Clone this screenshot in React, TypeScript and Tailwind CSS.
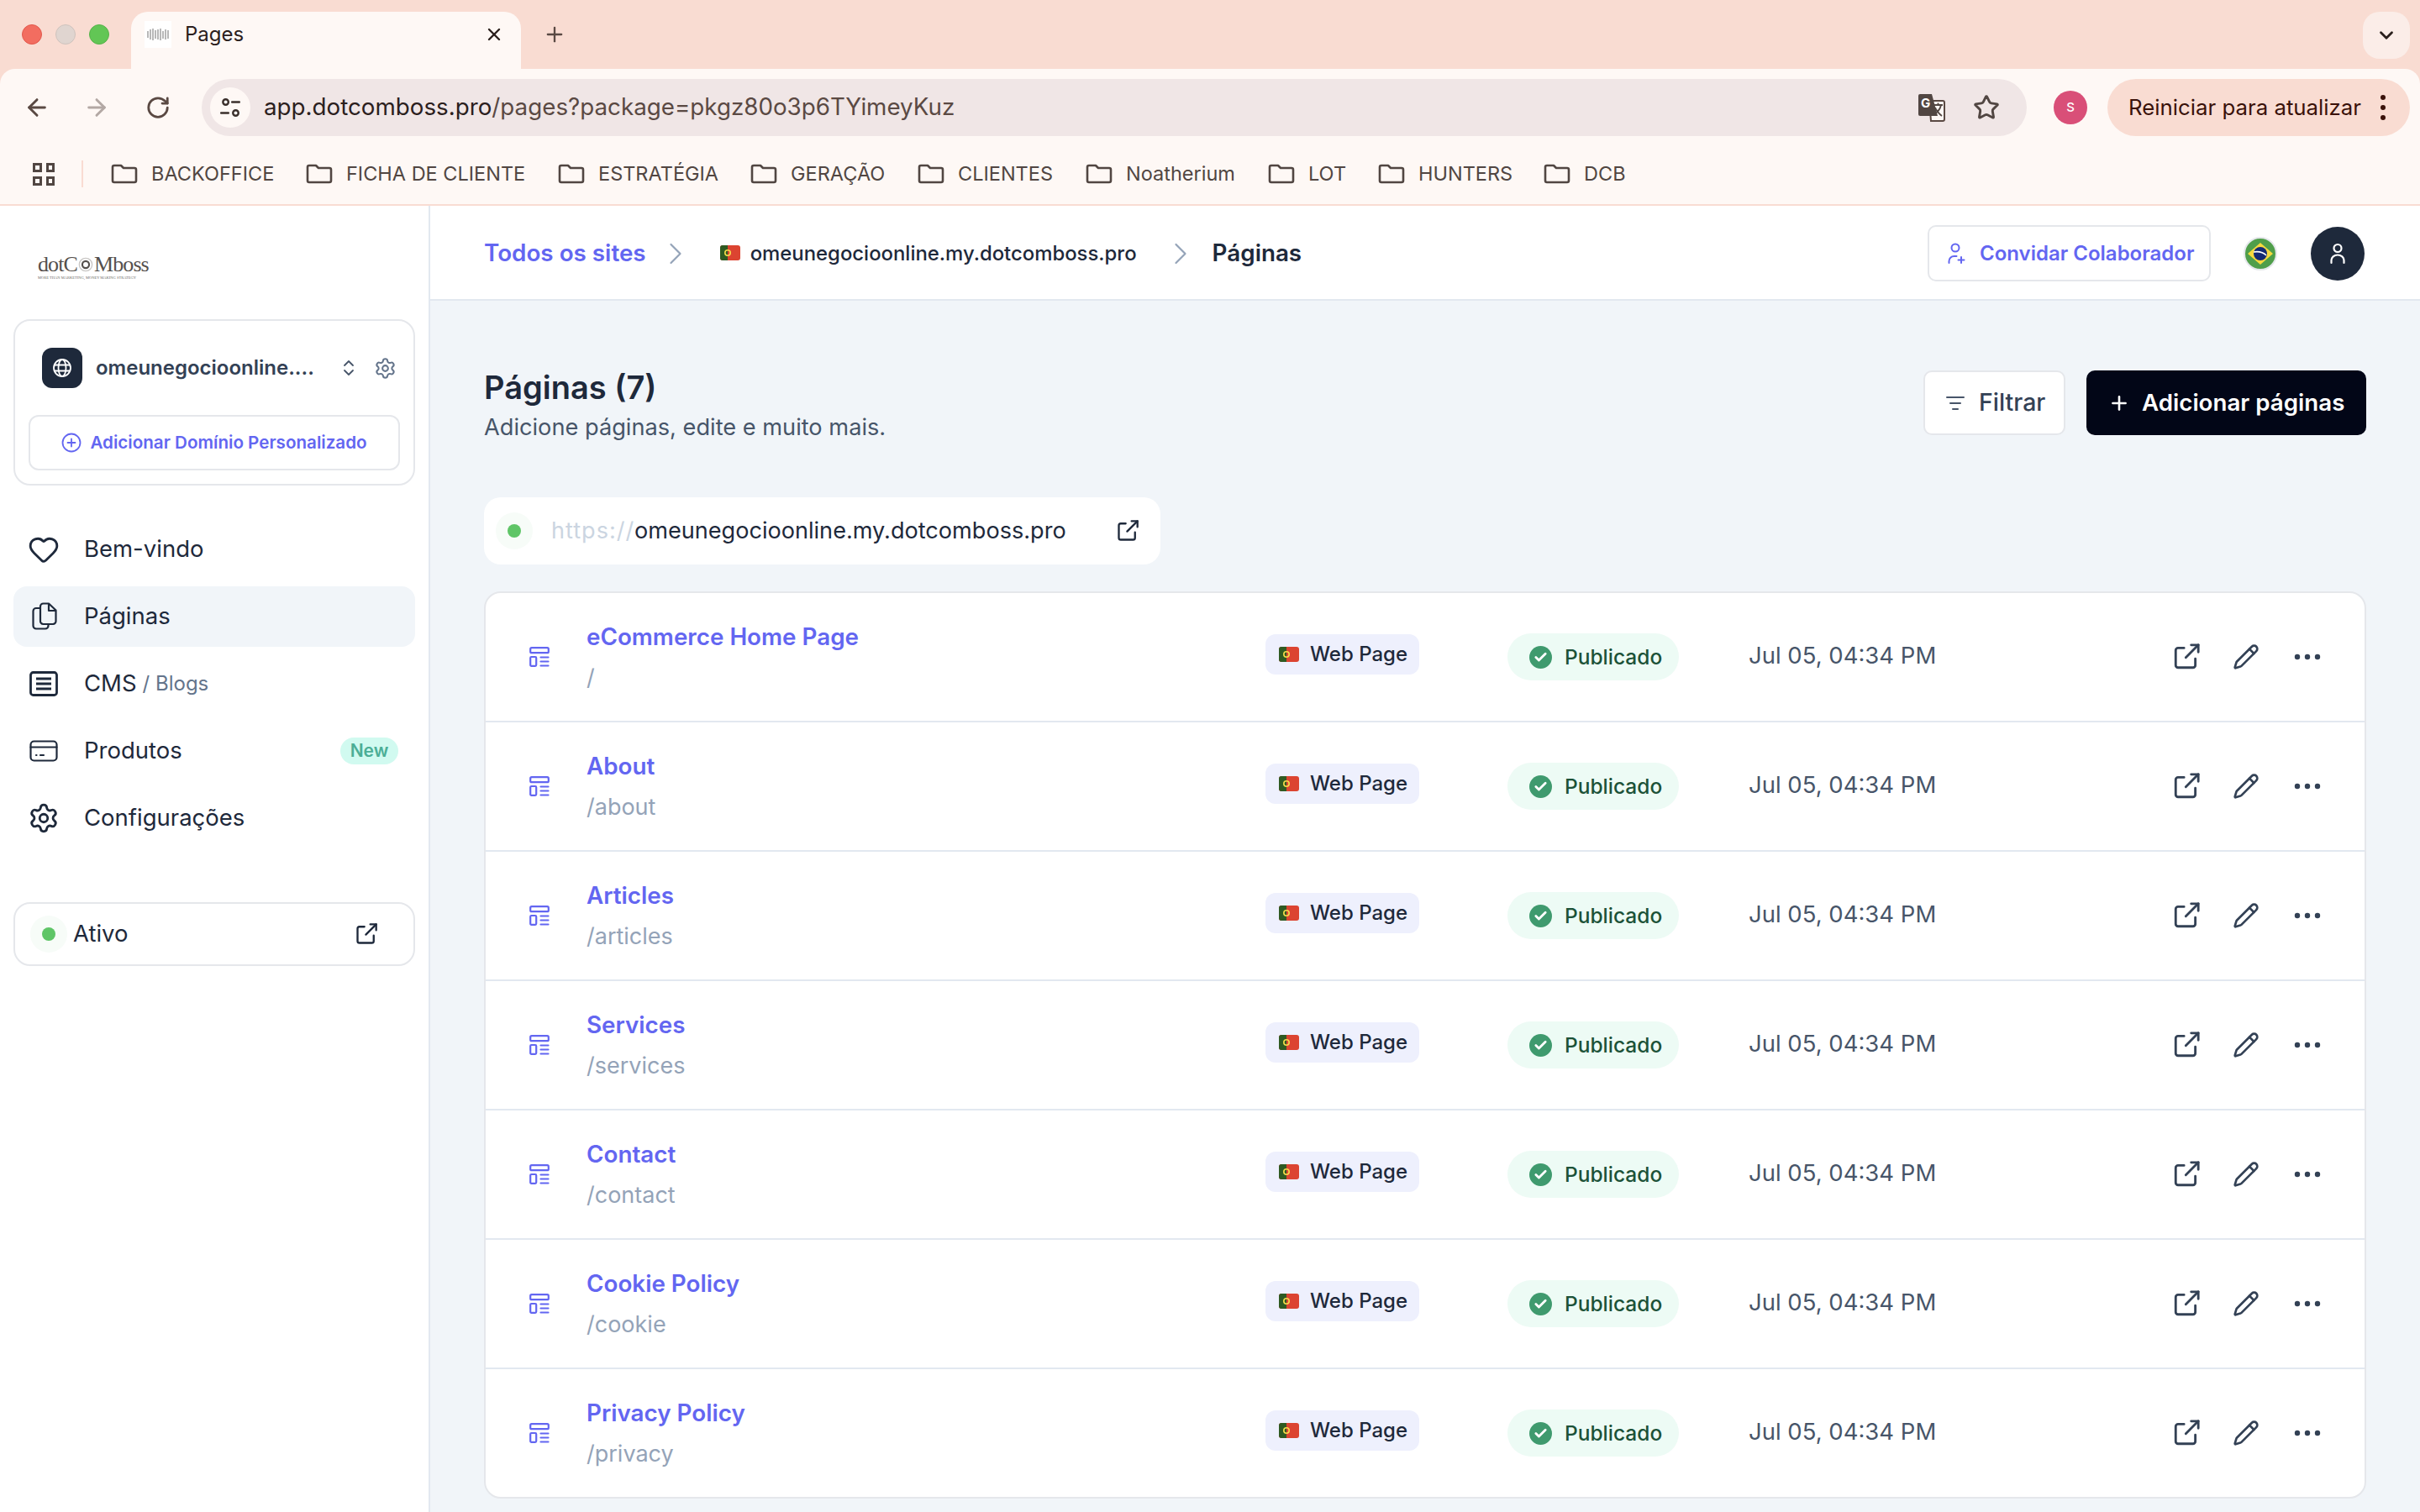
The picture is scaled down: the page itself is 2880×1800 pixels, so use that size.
import {
  ArrowLeft,
  ArrowRight,
  Check,
  ChevronDown,
  ChevronRight,
  ChevronsUpDown,
  Heart,
  ListFilter,
  Pencil,
  Plus,
  RotateCw,
  Settings,
  Star,
  X,
} from "lucide-react";

const bookmarks = [
  { label: "BACKOFFICE", w: "w-[147px]" },
  { label: "FICHA DE CLIENTE", w: "w-[215px]" },
  { label: "ESTRATÉGIA", w: "w-[144px]" },
  { label: "GERAÇÃO", w: "w-[114px]" },
  { label: "CLIENTES", w: "w-[115px]" },
  { label: "Noatherium", w: "w-[132px]" },
  { label: "LOT", w: "w-[46px]" },
  { label: "HUNTERS", w: "w-[112px]" },
  { label: "DCB", w: "w-[51px]" },
];

const pages = [
  { name: "eCommerce Home Page", path: "/" },
  { name: "About", path: "/about" },
  { name: "Articles", path: "/articles" },
  { name: "Services", path: "/services" },
  { name: "Contact", path: "/contact" },
  { name: "Cookie Policy", path: "/cookie" },
  { name: "Privacy Policy", path: "/privacy" },
];

function ExternalIcon({ className }: { className?: string }) {
  return (
    <svg viewBox="0 0 24 24" fill="none" stroke="currentColor" strokeWidth="2" strokeLinecap="round" strokeLinejoin="round" className={className}>
      <path d="M10 4.500H5a2 2 0 0 0-2 2V19a2 2 0 0 0 2 2h12.500a2 2 0 0 0 2-2v-5.500" />
      <path d="M22 2 11.500 12.500" />
      <path d="M16 2h6v6" />
    </svg>
  );
}

function FolderIcon() {
  return (
    <svg viewBox="0 0 32 24" fill="none" stroke="#514642" strokeWidth="2.600" strokeLinejoin="round" className="h-[24px] w-[32px] shrink-0">
      <path d="M2 4a2 2 0 0 1 2-2h8l3 3h13a2 2 0 0 1 2 2v13a2 2 0 0 1-2 2H4a2 2 0 0 1-2-2Z" />
    </svg>
  );
}

function PortugalFlag() {
  return (
    <svg viewBox="0 0 24 18" className="h-[18px] w-[24px] shrink-0">
      <rect width="24" height="18" rx="3" fill="#dc4431" />
      <path d="M3 0h6v18H3a3 3 0 0 1-3-3V3a3 3 0 0 1 3-3Z" fill="#2f5a22" />
      <circle cx="9" cy="9" r="3.200" fill="none" stroke="#f5dc4a" strokeWidth="1.600" />
    </svg>
  );
}

function PageTypeIcon() {
  return (
    <svg viewBox="0 0 24 24" fill="none" stroke="#6366f1" strokeWidth="2.200" strokeLinecap="round" className="h-[24px] w-[24px]">
      <rect x="1.200" y="1.200" width="21.600" height="6" rx="1.500" />
      <rect x="1.200" y="12" width="7" height="10.800" rx="1.200" />
      <path d="M13.500 12.500h9M13.500 17.500h9M13.500 22.500h9" />
    </svg>
  );
}

function LogoRing() {
  return (
    <svg viewBox="0 0 20 20" className="mx-[1px] inline-block h-[18px] w-[18px] align-[-1px]">
      <circle cx="10" cy="10" r="8.500" fill="none" stroke="#c9c7c5" strokeWidth="1.500" />
      <circle cx="10" cy="10" r="4.500" fill="none" stroke="#55504d" strokeWidth="2.400" />
    </svg>
  );
}

function Chrome() {
  return (
    <div className="shrink-0 font-['Inter',sans-serif]">
      <div className="flex h-[82px] items-end bg-[#f9dcd2]">
        <div className="flex h-full w-[156px] shrink-0 items-center gap-[16px] pl-[26px]">
          <span className="h-[24px] w-[24px] rounded-full border border-[#e2584c] bg-[#f26d60]" />
          <span className="h-[24px] w-[24px] rounded-full border border-[#cfc3bd] bg-[#e0d5d0]" />
          <span className="h-[24px] w-[24px] rounded-full border border-[#56b24a] bg-[#62c655]" />
        </div>
        <div className="flex h-[68px] w-[464px] items-center rounded-t-[20px] bg-[#fef8f5] pb-[14px] pl-[16px] pr-[20px]">
          <div className="flex h-[32px] w-[32px] items-center justify-center bg-white">
            <div className="flex h-[14px] w-[26px] items-center justify-between">
              {[8, 12, 14, 10, 12, 14, 9, 12, 10].map((h, i) => (
                <span key={i} className="w-[2px] bg-[#b8b8b8]" style={{ height: h }} />
              ))}
            </div>
          </div>
          <span className="ml-[16px] text-[24px] text-[#2b201d]">Pages</span>
          <X className="ml-auto h-[24px] w-[24px] text-[#2b201d]" strokeWidth={2.4} />
        </div>
        <div className="ml-[26px] flex h-[68px] items-center pb-[14px]">
          <Plus className="h-[28px] w-[28px] text-[#5a4943]" strokeWidth={2} />
        </div>
        <div className="mb-[12px] ml-auto mr-[12px] flex h-[56px] w-[56px] items-center justify-center rounded-[20px] bg-[#fbede8]">
          <ChevronDown className="h-[26px] w-[26px] text-[#2b201d]" strokeWidth={2.600} />
        </div>
      </div>
      <div className="bg-[#f9dcd2]">
        <div className="h-[161px] rounded-t-[18px] bg-[#fef8f5] pt-[12px]">
          <div className="flex h-[68px] items-center pr-[12px]">
            <div className="flex w-[240px] shrink-0 items-center pl-[28px]">
              <ArrowLeft className="h-[32px] w-[32px] text-[#5a4943]" strokeWidth={2.200} />
              <ArrowRight className="ml-[39px] h-[32px] w-[32px] text-[#b3a8a4]" strokeWidth={2.200} />
              <RotateCw className="ml-[42px] h-[30px] w-[30px] text-[#5a4943]" strokeWidth={2.200} />
            </div>
            <div className="flex h-[68px] w-[2172px] items-center rounded-full bg-[#f0e6e6] pl-[10px] pr-[32px]">
              <div className="flex h-[48px] w-[48px] items-center justify-center rounded-full bg-[#fef8f5]">
                <svg viewBox="0 0 24 24" fill="none" stroke="#3a2f2b" strokeWidth="2.200" strokeLinecap="round" className="h-[26px] w-[26px]">
                  <circle cx="7" cy="6" r="3" />
                  <path d="M14 6h8M2 18h8" />
                  <circle cx="18" cy="18" r="3" />
                </svg>
              </div>
              <span className="ml-[16px] text-[27.750px] text-[#2b201d]">
                app.dotcomboss.pro<span className="text-[#5a4943]">/pages?package=pkgz80o3p6TYimeyKuz</span>
              </span>
              <svg viewBox="0 0 34 34" className="ml-auto h-[34px] w-[34px]">
                <path d="M14 9h16a2 2 0 0 1 2 2v20a2 2 0 0 1-2 2H16Z" fill="#fef8f5" stroke="#5a4943" strokeWidth="2" />
                <path d="M3 1h14l7 26H3a2 2 0 0 1-2-2V3a2 2 0 0 1 2-2Z" fill="#514642" />
                <text x="4" y="17" fontSize="15" fontWeight="700" fill="#fff" fontFamily="Inter, sans-serif">G</text>
                <path d="M19 14h11M24.500 11.500v2.500M28 14c-1 5-5 9-8 11M21 17c1 3 5 8 8 10" fill="none" stroke="#514642" strokeWidth="1.800" />
              </svg>
              <Star className="ml-[32px] h-[32px] w-[32px] text-[#514642]" strokeWidth={2.200} />
            </div>
            <div className="ml-[32px] flex h-[40px] w-[40px] shrink-0 items-center justify-center rounded-full bg-[#d94f78] text-[15px] font-medium text-white">
              S
            </div>
            <div className="ml-[24px] flex h-[68px] flex-1 items-center rounded-full bg-[#f9dcd2] pl-[25px] pr-[29px]">
              <span className="whitespace-nowrap text-[25.800px] text-[#3a120a]">Reiniciar para atualizar</span>
              <div className="ml-auto flex flex-col gap-[6px]">
                <span className="h-[6px] w-[6px] rounded-full bg-[#3a120a]" />
                <span className="h-[6px] w-[6px] rounded-full bg-[#3a120a]" />
                <span className="h-[6px] w-[6px] rounded-full bg-[#3a120a]" />
              </div>
            </div>
          </div>
          <div className="mt-[17px] flex h-[56px] items-center pl-[39px] text-[23.500px] text-[#514642]">
            <div className="grid h-[27px] w-[26px] grid-cols-2 gap-[5px]">
              <span className="border-[3px] border-[#514642]" />
              <span className="border-[3px] border-[#514642]" />
              <span className="border-[3px] border-[#514642]" />
              <span className="border-[3px] border-[#514642]" />
            </div>
            <span className="ml-[32px] mr-[33px] h-[32px] w-[2px] bg-[#f9dcd2]" />
            {bookmarks.map((b) => (
              <div key={b.label} className="mr-[37px] flex items-center gap-[16px]">
                <FolderIcon />
                <span className={`${b.w} whitespace-nowrap`}>{b.label}</span>
              </div>
            ))}
          </div>
        </div>
      </div>
      <div className="h-[2px] bg-[#f9dcd2]" />
    </div>
  );
}

function NavItem({ icon, active, children }: { icon: React.ReactNode; active?: boolean; children: React.ReactNode }) {
  return (
    <div className={`flex h-[72px] items-center rounded-[16px] pl-[17px] pr-[20px] text-[27.500px] text-[#1e293b] ${active ? "bg-[#f1f5f9]" : ""}`}>
      <span className="flex w-[67px] shrink-0 items-center">{icon}</span>
      {children}
    </div>
  );
}

function Sidebar() {
  return (
    <aside className="flex w-[512px] shrink-0 flex-col border-r-2 border-[#e2e8f0] bg-white px-[16px]">
      <div className="mt-[57px] flex h-[33px] w-[130px] flex-col pl-[29px]">
        <span className="whitespace-nowrap font-['Liberation_Serif',serif] text-[26px] leading-[26px] tracking-[-0.9px] text-[#55504d]">
          dotC
          <LogoRing />
          Mboss
        </span>
        <span className="whitespace-nowrap font-['Liberation_Serif',serif] text-[4.500px] leading-[6px] text-[#6b6866]">
          MORE THAN MARKETING, MONEY MAKING STRATEGY
        </span>
      </div>
      <div className="mt-[45px] rounded-[20px] border-2 border-[#e5e7eb] px-[16px] pb-[16px] pt-[32px]">
        <div className="flex h-[48px] items-center pl-[16px]">
          <div className="flex h-[48px] w-[48px] shrink-0 items-center justify-center rounded-[12px] bg-[#1e293b]">
            <svg viewBox="0 0 24 24" fill="none" stroke="#fff" strokeWidth="1.800" className="h-[24px] w-[24px]">
              <circle cx="12" cy="12" r="10" />
              <ellipse cx="12" cy="12" rx="4.500" ry="10" />
              <path d="M2.500 8.500h19M2.500 15.500h19" />
            </svg>
          </div>
          <span className="ml-[16px] whitespace-nowrap text-[24px] font-semibold text-[#334155]">omeunegocioonline....</span>
          <ChevronsUpDown className="ml-auto h-[24px] w-[24px] text-[#475569]" strokeWidth={1.800} />
          <Settings className="ml-[18px] mr-[4px] h-[27px] w-[27px] text-[#64748b]" strokeWidth={1.800} />
        </div>
        <div className="mt-[32px] flex h-[66px] items-center justify-center gap-[10px] rounded-[12px] border-2 border-[#e5e7eb] text-[20.600px] font-semibold text-[#6366f1]">
          <svg viewBox="0 0 24 24" fill="none" stroke="currentColor" strokeWidth="1.800" strokeLinecap="round" className="h-[24px] w-[24px]">
            <circle cx="12" cy="12" r="10.500" />
            <path d="M12 7.500v9M7.500 12h9" />
          </svg>
          Adicionar Domínio Personalizado
        </div>
      </div>
      <nav className="mt-[40px] flex flex-col gap-[8px]">
        <NavItem icon={<Heart className="h-[38px] w-[38px]" strokeWidth={1.800} />}>Bem-vindo</NavItem>
        <NavItem
          active
          icon={
            <svg viewBox="0 0 30 34" fill="none" stroke="#1e293b" strokeWidth="2.200" strokeLinejoin="round" className="ml-[5px] h-[34px] w-[30px]">
              <path d="M10 7h-5a3.500 3.500 0 0 0-3.500 3.500V28A3.500 3.500 0 0 0 5 31.500h11a3.500 3.500 0 0 0 3.500-3.500v-2" />
              <path d="M10 5a3.500 3.500 0 0 1 3.500-3.500H20l8.500 8V22a3.500 3.500 0 0 1-3.500 4H13.500A3.500 3.500 0 0 1 10 22Z" />
              <path d="M20 2v8h8" />
            </svg>
          }
        >
          Páginas
        </NavItem>
        <NavItem
          icon={
            <svg viewBox="0 0 34 30" fill="none" stroke="#1e293b" strokeWidth="2.800" className="ml-[2px] h-[30px] w-[34px]">
              <rect x="1.500" y="1.500" width="31" height="27" rx="3" />
              <path d="M8 9h18M8 15h18M8 21h18" />
            </svg>
          }
        >
          CMS
          <span className="ml-[7px] text-[24px] text-[#64748b]">/ Blogs</span>
        </NavItem>
        <NavItem
          icon={
            <svg viewBox="0 0 34 26" fill="none" stroke="#1e293b" strokeWidth="2.200" strokeLinecap="round" className="ml-[2px] h-[26px] w-[34px]">
              <rect x="1.500" y="1.500" width="31" height="23" rx="4" />
              <path d="M1.500 8.500h31M8 18h.5M13 18h4" />
            </svg>
          }
        >
          Produtos
          <span className="ml-auto flex h-[32px] w-[69px] items-center justify-center rounded-full bg-[#d1faf0] text-[21px] font-semibold text-[#4bae96]">
            New
          </span>
        </NavItem>
        <NavItem icon={<Settings className="h-[38px] w-[38px]" strokeWidth={1.800} />}>Configurações</NavItem>
      </nav>
      <div className="mt-[64px] flex h-[76px] items-center rounded-[20px] border-2 border-[#e5e7eb] pl-[18px] pr-[42px]">
        <span className="flex h-[44px] w-[44px] items-center justify-center rounded-full bg-[#f7fcf8]">
          <span className="h-[16px] w-[16px] rounded-full bg-[#5fc567]" />
        </span>
        <span className="ml-[7px] text-[27.500px] text-[#1e293b]">Ativo</span>
        <ExternalIcon className="ml-auto h-[28px] w-[28px] text-[#1e293b]" />
      </div>
    </aside>
  );
}

function PageRow({ name, path, last }: { name: string; path: string; last?: boolean }) {
  return (
    <div className={`flex items-center ${last ? "h-[152px]" : "h-[154px] border-b-2 border-[#e2e8f0]"}`}>
      <div className="flex w-[120px] shrink-0 pl-[52px]">
        <PageTypeIcon />
      </div>
      <div className="flex w-[808px] shrink-0 flex-col gap-[17px]">
        <span className="text-[27.800px] leading-[32px] font-semibold text-[#6366f1]">{name}</span>
        <span className="text-[27px] leading-[32px] text-[#94a3b8]">{path}</span>
      </div>
      <div className="w-[288px] shrink-0">
        <div className="-mt-[6px] flex h-[48px] w-[183px] items-center gap-[13px] rounded-[12px] bg-[#eef0fd] pl-[16px] text-[24px] font-medium text-[#1e293b]">
          <PortugalFlag />
          Web Page
        </div>
      </div>
      <div className="w-[287px] shrink-0">
        <div className="flex h-[56px] w-[204px] items-center rounded-full bg-[#edfbf5] pl-[26px] text-[24.500px] font-medium text-[#1c5238]">
          <span className="flex h-[27px] w-[27px] items-center justify-center rounded-full bg-[#3f9a6e]">
            <Check className="h-[17px] w-[17px] text-white" strokeWidth={4} />
          </span>
          <span className="ml-[15px]">Publicado</span>
        </div>
      </div>
      <span className="-mt-[3px] w-[504px] shrink-0 text-[27.500px] text-[#475569]">Jul 05, 04:34 PM</span>
      <div className="flex items-center text-[#334155]">
        <ExternalIcon className="h-[34px] w-[34px]" />
        <Pencil className="ml-[38px] h-[32px] w-[32px]" strokeWidth={2} />
        <svg viewBox="0 0 32 8" fill="currentColor" className="ml-[41px] h-[8px] w-[32px]">
          <circle cx="4" cy="4" r="3.200" />
          <circle cx="16" cy="4" r="3.200" />
          <circle cx="28" cy="4" r="3.200" />
        </svg>
      </div>
    </div>
  );
}

export default function App() {
  return (
    <div className="flex h-screen flex-col overflow-hidden bg-white font-['Inter',sans-serif]">
      <Chrome />
      <div className="flex min-h-0 flex-1">
        <Sidebar />
        <main className="flex min-w-0 flex-1 flex-col bg-[#f1f5f9]">
          <header className="flex h-[113px] shrink-0 items-center border-b-2 border-[#e2e8f0] bg-white pl-[64px] pr-[66px] pt-[2px]">
            <span className="text-[27.800px] font-semibold text-[#6366f1]">Todos os sites</span>
            <ChevronRight className="ml-[13px] h-[44px] w-[44px] text-[#94a3b8]" strokeWidth={1.200} />
            <span className="ml-[31px] flex items-center gap-[12px] text-[23.900px] font-medium text-[#1e293b]">
              <PortugalFlag />
              omeunegocioonline.my.dotcomboss.pro
            </span>
            <ChevronRight className="ml-[30px] h-[44px] w-[44px] text-[#94a3b8]" strokeWidth={1.200} />
            <span className="ml-[16px] text-[27.800px] font-semibold text-[#1e293b]">Páginas</span>
            <div className="ml-auto flex h-[67px] w-[337px] items-center rounded-[10px] border-2 border-[#e5e7eb] pl-[22px] text-[24px] font-semibold text-[#6366f1]">
              <svg viewBox="0 0 22 26" fill="none" stroke="currentColor" strokeWidth="2" strokeLinecap="round" className="h-[26px] w-[22px] shrink-0">
                <circle cx="9" cy="6" r="4.500" />
                <path d="M1.500 24v-2a6 6 0 0 1 6-6h3M16 17v7M12.500 20.500h7" />
              </svg>
              <span className="ml-[16px] whitespace-nowrap">Convidar Colaborador</span>
            </div>
            <svg viewBox="0 0 40 40" className="ml-[39px] h-[40px] w-[40px] shrink-0">
              <circle cx="20" cy="20" r="19" fill="#4f9e4a" stroke="#e5e7eb" strokeWidth="2" />
              <path d="M20 7 35 20 20 33 5 20Z" fill="#f6d93e" />
              <circle cx="20" cy="20" r="8" fill="#142a73" />
              <path d="M12 18c6-1 11 0 15 4" fill="none" stroke="#fff" strokeWidth="1.600" />
            </svg>
            <div className="ml-[40px] flex h-[64px] w-[64px] shrink-0 items-center justify-center rounded-full bg-[#1e293b]">
              <svg viewBox="0 0 20 26" fill="none" stroke="#fff" strokeWidth="2.200" strokeLinecap="round" className="h-[26px] w-[20px]">
                <circle cx="10" cy="6.500" r="4.500" />
                <path d="M2.500 24v-3a7.500 6.500 0 0 1 15 0v3" />
              </svg>
            </div>
          </header>
          <div className="flex flex-1 flex-col px-[64px]">
            <div className="mt-[83px] flex items-start justify-between">
              <div className="-mt-[4px]">
                <h1 className="text-[38px] leading-[48px] font-semibold text-[#1e293b]">Páginas (7)</h1>
                <p className="text-[27.200px] leading-[48px] text-[#475569]">Adicione páginas, edite e muito mais.</p>
              </div>
              <div className="flex gap-[25px]">
                <div className="flex h-[77px] w-[169px] items-center rounded-[10px] border-2 border-[#e5e7eb] bg-white pl-[24px] text-[28.500px] font-medium text-[#334155]">
                  <ListFilter className="h-[24px] w-[24px] text-[#475569]" strokeWidth={2} />
                  <span className="ml-[16px]">Filtrar</span>
                </div>
                <div className="flex h-[77px] w-[333px] items-center rounded-[10px] bg-[#020617] pl-[26px] text-[27.700px] font-semibold text-white">
                  <Plus className="h-[26px] w-[26px]" strokeWidth={2.400} />
                  <span className="ml-[14px]">Adicionar páginas</span>
                </div>
              </div>
            </div>
            <div className="mt-[59px] flex h-[80px] w-[805px] items-center rounded-[20px] bg-white pl-[14px] pr-[25px] text-[27.100px]">
              <span className="flex h-[44px] w-[44px] items-center justify-center rounded-full bg-[#f7fcf8]">
                <span className="h-[16px] w-[16px] rounded-full bg-[#5fc567]" />
              </span>
              <span className="ml-[22px] w-[99px] tracking-[1px] text-[#cbd5e1]">https://</span>
              <span className="text-[#1e293b]">omeunegocioonline.my.dotcomboss.pro</span>
              <ExternalIcon className="ml-auto h-[28px] w-[28px] text-[#1e293b]" />
            </div>
            <div className="mt-[32px] rounded-[20px] border-2 border-[#e5e7eb] bg-white">
              {pages.map((p, i) => (
                <PageRow key={p.path} name={p.name} path={p.path} last={i === pages.length - 1} />
              ))}
            </div>
          </div>
        </main>
      </div>
    </div>
  );
}
